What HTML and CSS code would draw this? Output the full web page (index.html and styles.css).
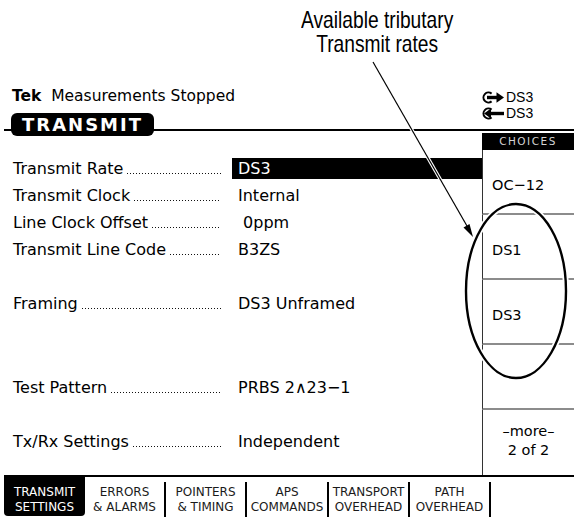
FILE: index.html
```html
<!DOCTYPE html>
<html lang="en">
<head>
  <meta charset="UTF-8" />
  <meta name="viewport" content="width=device-width, initial-scale=1.0" />
  <title>Transmit Settings</title>
  <link rel="stylesheet" href="styles.css">
</head>
<body>
  <div class="callout"><span class="callout-text">Available tributary<br>Transmit rates</span></div>

  <div class="status">
    <div class="status-text"><b>Tek</b>&nbsp; Measurements Stopped</div>
    <div class="signals">
      <div class="signal">
        <svg width="22" height="13" viewBox="0 0 22 13">
          <path d="M9.6 2.6 A5 5 0 1 0 9.6 10.4" fill="none" stroke="#000" stroke-width="2"/>
          <rect x="5" y="4.8" width="11" height="3.4"/>
          <polygon points="14.5,1.2 22,6.5 14.5,11.8"/>
        </svg>
        DS3
      </div>
      <div class="signal">
        <svg width="22" height="13" viewBox="0 0 22 13">
          <path d="M9.6 2.6 A5 5 0 1 0 9.6 10.4" fill="none" stroke="#000" stroke-width="2"/>
          <polygon points="2,6.5 9,1.4 9,11.6"/>
          <rect x="8.5" y="4.8" width="13.5" height="3.4"/>
        </svg>
        DS3
      </div>
    </div>
  </div>

  <div class="titlebar">
    <div class="title">TRANSMIT</div>
  </div>

  <div class="main">
    <div class="settings">
      <div class="row"><span class="label">Transmit Rate<i class="dots"></i></span><span class="value selected">DS3</span></div>
      <div class="row"><span class="label">Transmit Clock<i class="dots"></i></span><span class="value">Internal</span></div>
      <div class="row"><span class="label">Line Clock Offset<i class="dots"></i></span><span class="value">&nbsp;0ppm</span></div>
      <div class="row"><span class="label">Transmit Line Code<i class="dots"></i></span><span class="value">B3ZS</span></div>
      <div class="row skip"><span class="label">Framing<i class="dots"></i></span><span class="value">DS3 Unframed</span></div>
      <div class="row skip-2"><span class="label">Test Pattern<i class="dots"></i></span><span class="value">PRBS 2∧23−1</span></div>
      <div class="row skip"><span class="label">Tx/Rx Settings<i class="dots"></i></span><span class="value">Independent</span></div>
    </div>

    <div class="choices">
      <div class="choices-head">CHOICES</div>
      <div class="choice">OC−12</div>
      <div class="choice">DS1</div>
      <div class="choice">DS3</div>
      <div class="choice"></div>
      <div class="choice more">–more–<br>2 of 2</div>
    </div>
  </div>

  <div class="tabs">
    <div class="tab active">TRANSMIT<br>SETTINGS</div>
    <div class="tab">ERRORS<br>&amp; ALARMS</div>
    <div class="tab">POINTERS<br>&amp; TIMING</div>
    <div class="tab wide">APS<br>COMMANDS</div>
    <div class="tab">TRANSPORT<br>OVERHEAD</div>
    <div class="tab">PATH<br>OVERHEAD</div>
  </div>

  <!-- annotation drawn over the screen -->
  <svg class="overlay" width="574" height="517" viewBox="0 0 574 517">
    <line x1="373" y1="62" x2="467" y2="226" stroke="#fff" stroke-width="3.5"/>
    <line x1="373" y1="62" x2="467" y2="226" stroke="#000" stroke-width="1.2"/>
    <polygon points="473,237 463.5,227.4 469.5,224"/>
    <ellipse cx="516" cy="291" rx="50" ry="87" fill="none" stroke="#fff" stroke-width="6"/>
    <ellipse cx="516" cy="291" rx="50" ry="87" fill="none" stroke="#000" stroke-width="2.4"/>
  </svg>
</body>
</html>
```

FILE: styles.css
```css
body {
  margin: 0;
  width: 574px;
  height: 517px;
  position: relative;
  overflow: hidden;
  background: #fff;
  color: #000;
  font-family: "DejaVu Sans", sans-serif;
}
.callout {
  height: 81px;
  padding: 8px 0 0 180px;
  text-align: center;
  font-family: "Liberation Sans", sans-serif;
  font-size: 24px;
  line-height: 24px;
}
.callout-text {
  display: inline-block;
  transform: scaleX(0.8);
}
.status {
  display: flex;
  justify-content: space-between;
  height: 24px;
  padding-left: 12px;
}
.status-text {
  font-size: 15.5px;
  line-height: 15px;
}
.status-text b {
  font-weight: 600;
}
.signals {
  width: 92px;
}
.signal {
  display: flex;
  align-items: center;
  gap: 2px;
  height: 16px;
  font-family: "Liberation Sans", sans-serif;
  font-size: 14px;
  line-height: 16px;
}
.titlebar {
  height: 20px;
  margin-left: 4px;
  padding-left: 7px;
  background: linear-gradient(#000, #000) 0 16px / 100% 2px no-repeat;
}
.title {
  width: 143px;
  height: 23px;
  background: #000;
  color: #fff;
  border-radius: 6px;
  font-weight: bold;
  font-size: 18px;
  line-height: 23px;
  letter-spacing: 2px;
  text-align: center;
}
.main {
  display: flex;
  height: 342px;
}
.settings {
  width: 482px;
  box-sizing: border-box;
  padding: 25px 0 0 13px;
  display: flex;
  flex-direction: column;
}
.row {
  display: flex;
  height: 21px;
  margin-bottom: 6px;
  font-size: 16px;
  line-height: 21px;
  white-space: nowrap;
}
.row.skip {
  margin-top: 27px;
}
.row.skip-2 {
  margin-top: 57px;
}
.label {
  display: flex;
  width: 208px;
}
.dots {
  flex: 1;
  margin-left: 4px;
  background-image: linear-gradient(90deg, #111 1px, transparent 1px);
  background-size: 3px 1px;
  background-repeat: repeat-x;
  background-position: 0 15px;
}
.value {
  flex: 1;
  margin-left: 11px;
  padding-left: 6px;
}
.value.selected {
  background: #000;
  color: #fff;
}
.choices {
  width: 92px;
  display: flex;
  flex-direction: column;
}
.choices-head {
  height: 17px;
  background: #000;
  color: #d4d4d4;
  font-size: 10.5px;
  line-height: 17px;
  letter-spacing: 1.5px;
  text-align: center;
}
.choice {
  height: 65px;
  box-sizing: border-box;
  border-left: 1px solid #333;
  border-bottom: 2px solid #8c8c8c;
  padding: 25px 0 0 9px;
  font-size: 14.5px;
  line-height: 20px;
}
.choice.more {
  border-bottom: none;
  padding: 12px 0 0;
  line-height: 19px;
  text-align: center;
}
.tabs {
  display: flex;
  align-items: flex-start;
  margin-left: 4px;
  height: 40px;
  border-top: 2px solid #000;
}
.tab {
  width: 81px;
  height: 35px;
  margin-top: 5px;
  box-sizing: border-box;
  padding-top: 2.5px;
  border-right: 2px solid #000;
  font-size: 12px;
  line-height: 15px;
  text-align: center;
  white-space: nowrap;
  color: #1a1a1a;
}
.tab.wide {
  width: 82px;
}
.tab.active {
  height: 39px;
  margin-top: 0;
  padding-top: 7.5px;
  border-right: none;
  background: #000;
  color: #fff;
  border-radius: 0 0 4px 4px;
}
.overlay {
  position: absolute;
  left: 0;
  top: 0;
  pointer-events: none;
}
```
